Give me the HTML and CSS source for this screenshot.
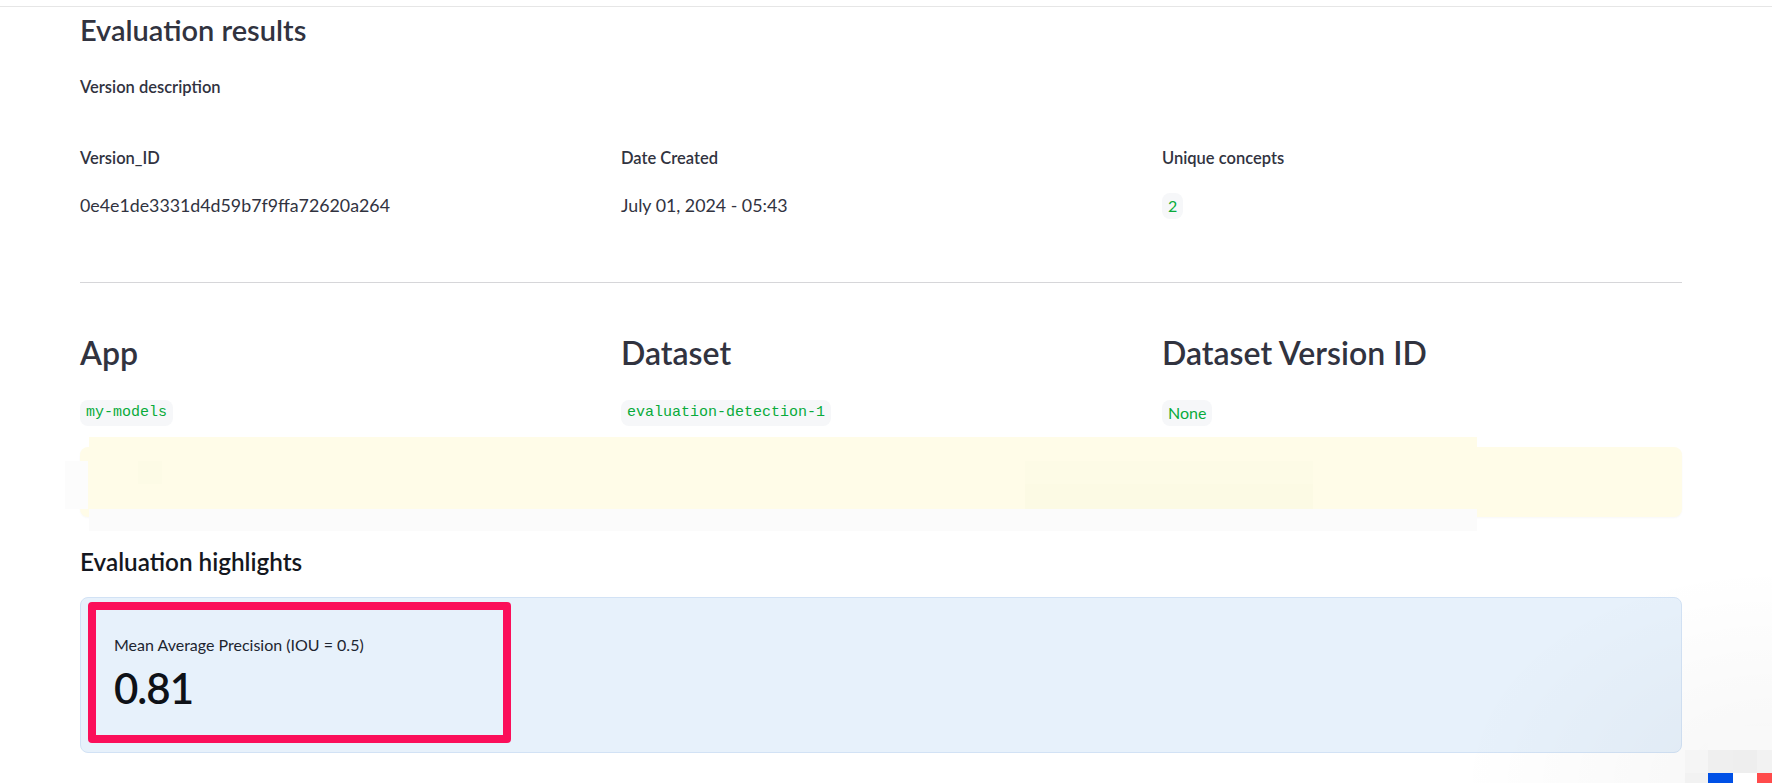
FILE: index.html
```html
<!DOCTYPE html>
<html lang="en">
<head>
<meta charset="utf-8">
<title>Evaluation results</title>
<link rel="stylesheet" href="styles.css">
</head>
<body>
<div class="topbar"></div>
<main class="main">
  <h1 class="title">Evaluation results</h1>
  <div class="subtitle">Version description</div>

  <div class="grid3 meta-labels">
    <div class="label">Version_ID</div>
    <div class="label">Date Created</div>
    <div class="label">Unique concepts</div>
  </div>
  <div class="grid3 meta-values">
    <div class="value">0e4e1de3331d4d59b7f9ffa72620a264</div>
    <div class="value">July 01, 2024 - 05:43</div>
    <div class="value"><span class="pill pill-sans">2</span></div>
  </div>

  <hr class="divider">

  <div class="grid3 heads">
    <h2 class="h2">App</h2>
    <h2 class="h2">Dataset</h2>
    <h2 class="h2">Dataset Version ID</h2>
  </div>
  <div class="grid3 pills">
    <div class="pill-cell"><span class="pill">my-models</span></div>
    <div class="pill-cell"><span class="pill">evaluation-detection-1</span></div>
    <div class="pill-cell"><span class="pill pill-sans">None</span></div>
  </div>

  <div class="alert-wrap">
    <div class="alert"></div>
    <div class="ghost">
      <div class="ghost-yellow">
        <span class="ghost-sq"></span>
        <span class="ghost-strip"><span class="ghost-strip-dark"></span></span>
      </div>
      <div class="ghost-grey"></div>
      <span class="ghost-left"></span>
    </div>
  </div>

  <h3 class="h3">Evaluation highlights</h3>
  <div class="info">
    <div class="metric">
      <div class="metric-label">Mean Average Precision (IOU = 0.5)</div>
      <div class="metric-value">0.81</div>
    </div>
  </div>
</main>

<div class="corner-shade"></div>
<div class="pixels">
  <span class="px c0"></span><span class="px c1"></span><span class="px c1"></span><span class="px c1"></span>
  <span class="px c2"></span><span class="px c3"></span><span class="px c4"></span><span class="px c5"></span>
  <span class="px c5"></span><span class="px blue"></span><span class="px white"></span><span class="px red"></span>
</div>
</body>
</html>
```

FILE: styles.css
```css
html, body {
  margin: 0;
  padding: 0;
  background: #ffffff;
  overflow: hidden;
  height: 783px;
}

body {
  font-family: "Source Sans Pro", "Lato", sans-serif;
  color: #31333f;
  position: relative;
}

.topbar {
  height: 6px;
  border-bottom: 1px solid #e6e6e6;
}

.main {
  padding: 0 90px 0 80px;
}

.title {
  margin: 6px 0 0;
  font-size: 29px;
  line-height: 34px;
  font-weight: 600;
  color: #31333f;
}

.subtitle {
  margin-top: 29px;
  font-size: 16.5px;
  line-height: 22px;
  font-weight: 600;
}

.grid3 {
  display: grid;
  grid-template-columns: repeat(3, 1fr);
  column-gap: 21px;
}

.meta-labels {
  margin-top: 49px;
}

.label {
  font-size: 16.5px;
  line-height: 22px;
  font-weight: 600;
}

.meta-values {
  margin-top: 23px;
}

.value {
  font-size: 17.8px;
  line-height: 26px;
  font-weight: 400;
}

.value .pill {
  vertical-align: baseline;
}

.divider {
  margin: 63px 0 0;
  border: 0;
  border-top: 1px solid #d6d6d9;
  height: 0;
}

.heads {
  margin-top: 50px;
}

.h2 {
  margin: 0;
  font-size: 32px;
  line-height: 40px;
  font-weight: 600;
}

.pills {
  margin-top: 27px;
}

.pill-cell {
  display: flex;
  align-items: flex-start;
  height: 26px;
}

.pill {
  display: inline-block;
  height: 26px;
  line-height: 26px;
  padding: 0 6px;
  border-radius: 8px;
  background: #f6f7f9;
  color: #09ab3b;
  font-family: "Liberation Mono", monospace;
  font-size: 15px;
}

.pill-sans {
  font-family: "Source Sans Pro", "Lato", sans-serif;
  font-size: 16px;
}

.alert-wrap {
  position: relative;
  margin-top: 21px;
}

.alert {
  height: 70px;
  border-radius: 8px;
  background: #fffce8;
  box-shadow: 0 1px 2px rgba(0, 0, 0, 0.03);
}

.ghost {
  position: absolute;
  left: 9px;
  top: -10px;
  width: 1388px;
  height: 94px;
  display: flex;
  flex-direction: column;
}

.ghost-yellow {
  position: relative;
  height: 72px;
  background: #fffce8;
}

.ghost-grey {
  height: 22px;
  background: #fbfbfb;
}

.ghost-sq {
  position: absolute;
  left: 49px;
  top: 24px;
  width: 24px;
  height: 23px;
  background: #fdfbe6;
}

.ghost-strip {
  position: absolute;
  left: 936px;
  top: 24px;
  width: 288px;
  height: 48px;
  background: #fdfbe6;
  display: flex;
  align-items: flex-end;
}

.ghost-strip-dark {
  display: block;
  width: 100%;
  height: 25px;
  background: #fcfae4;
}

.ghost-left {
  position: absolute;
  left: -24px;
  top: 24px;
  width: 23px;
  height: 48px;
  background: #fcfcfc;
}

.h3 {
  margin: 30px 0 0;
  font-size: 24.3px;
  line-height: 30px;
  font-weight: 600;
  color: #141720;
}

.info {
  margin-top: 20px;
  height: 150px;
  border: 1px solid #d2e2f5;
  border-radius: 8px;
  background: #e7f1fb;
  padding: 4px 0 0 7px;
}

.metric {
  box-sizing: border-box;
  width: 423px;
  height: 141px;
  border: 8px solid #fb0f5a;
  border-radius: 4px;
  padding: 24px 0 0 18px;
}

.metric-label {
  font-size: 16px;
  line-height: 22px;
  color: #1d2530;
}

.metric-value {
  margin-top: 7px;
  font-size: 42px;
  line-height: 50px;
  font-weight: 600;
  letter-spacing: -1px;
  color: #0e1117;
}

.corner-shade {
  position: absolute;
  right: 0;
  bottom: 0;
  width: 320px;
  height: 220px;
  background: radial-gradient(ellipse at 100% 100%, rgba(0, 0, 0, 0.035) 0%, rgba(0, 0, 0, 0) 70%);
  pointer-events: none;
}

.pixels {
  position: absolute;
  right: 0;
  bottom: 0;
  display: grid;
  grid-template-columns: 23px 25px 24px 15px;
  grid-template-rows: 24px 23px 10px;
}

.px { display: block; }
.c0 { background: transparent; }
.c1 { background: #f9f9f9; }
.c2 { background: #f5f5f5; }
.c3 { background: #efefef; }
.c4 { background: #eeeeee; }
.c5 { background: #f2f2f2; }
.blue { background: #0050e6; }
.white { background: #ffffff; }
.red { background: #ff4b4b; }
```
